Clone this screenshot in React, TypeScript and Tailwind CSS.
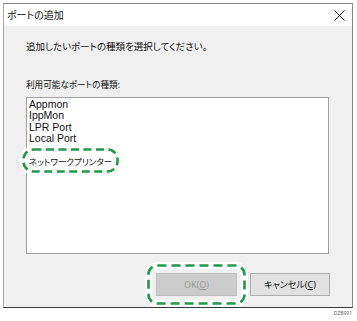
import React from 'react';

// ポートの追加 ダイアログ（説明用スクリーンショット）

const ports = ['Appmon', 'IppMon', 'LPR Port', 'Local Port'];

function CloseIcon() {
  return (
    <svg width="11" height="11" viewBox="0 0 11 11" className="text-[#222]">
      <path d="M0.5 0.5L10.5 10.5M10.5 0.5L0.5 10.5" stroke="currentColor" strokeWidth="1" fill="none" />
    </svg>
  );
}

function Callouts() {
  const green = '#1e9a4a';
  return (
    <svg className="absolute inset-0 pointer-events-none" width="357" height="321" viewBox="0 0 357 321">
      {/* ネットワークプリンター */}
      <rect x="23.5" y="149.5" width="94" height="22" rx="10" fill="none" stroke="#fff" strokeWidth="7" />
      <rect x="23.5" y="149.5" width="94" height="22" rx="10" fill="none" stroke={green} strokeWidth="2.6" strokeDasharray="8 4.5" />
      {/* OK ボタン */}
      <rect x="148.5" y="265.5" width="96" height="38" rx="9" fill="none" stroke="#fff" strokeWidth="7" />
      <rect x="148.5" y="265.5" width="96" height="38" rx="9" fill="none" stroke={green} strokeWidth="2.6" strokeDasharray="9 5" />
    </svg>
  );
}

export default function App() {
  return (
    <div
      className="relative w-[357px] h-[321px] bg-white pt-[3px] pl-[3px] text-[9px] text-[#111] [font-feature-settings:'palt']"
      style={{ fontFamily: '"Noto Sans", "Noto Sans CJK JP", sans-serif' }}
    >
      <div className="w-[350px] h-[305px] flex flex-col border border-[#8a8a8a] border-l-[#a8a8a8] border-b-[#3a3a3a]">
        {/* タイトルバー */}
        <div className="h-[22px] bg-white flex items-center justify-between pl-[3px] pr-[7px]">
          <span className="text-[10px] leading-[14px]">ポートの追加</span>
          <CloseIcon />
        </div>

        {/* 本文 */}
        <div className="flex-1 bg-[#f0f0f0] pl-[22px] flex flex-col">
          <p className="mt-[14px] leading-[14px] text-[9.5px]">追加したいポートの種類を選択してください。</p>
          <p className="mt-[24px] leading-[14px] text-[8.6px]">利用可能なポートの種類:</p>

          <div className="mt-[5px] w-[303px] h-[157px] bg-white border border-[#a0a0a0] pl-[2px] pt-[0.5px]">
            {ports.map(p => (
              <div
                key={p}
                className="h-[11.5px] text-[10.5px] leading-[11.5px]"
                style={{ fontFamily: '"Liberation Sans", sans-serif' }}
              >
                {p}
              </div>
            ))}
            <div className="h-[11.5px]" />
            <div className="h-[11.5px] text-[8.5px] leading-[11.5px]">ネットワークプリンター</div>
          </div>

          {/* ボタン */}
          <div className="mt-[19px] flex pl-[130px] gap-[13px]">
            <div className="w-[81px] h-[23px] bg-[#cccccc] border border-[#bfbfbf] flex items-center justify-center text-[#9a9a9a]">
              OK(<span className="underline">O</span>)
            </div>
            <div className="w-[80px] h-[23px] bg-[#e1e1e1] border border-[#adadad] flex items-center justify-center">
              キャンセル(<span className="underline">C</span>)
            </div>
          </div>
        </div>
      </div>

      <div className="flex justify-end pr-[5px] mt-[2px] text-[5px] leading-[6px] text-[#666]">DZB991</div>

      <Callouts />
    </div>
  );
}
